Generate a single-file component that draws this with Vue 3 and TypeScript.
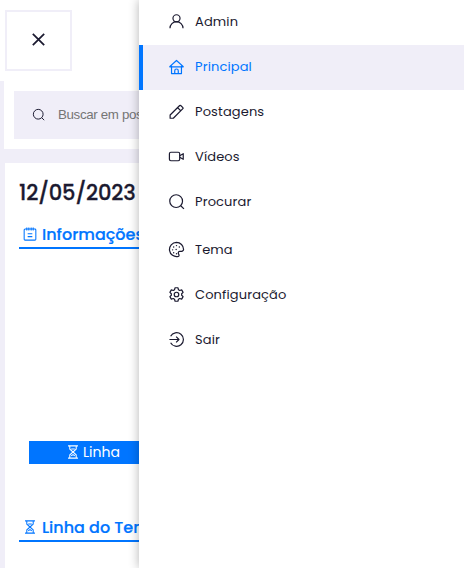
<script setup lang="ts">
interface MenuItem {
  label: string
  icon: string
  active?: boolean
  spaced?: boolean
}

const icons: Record<string, string> = {
  user: '<circle cx="12" cy="7.500" r="5"/><path d="M2.800 21.500a9.200 9.200 0 0 1 18.400 0"/>',
  home: '<path d="M2 12.500 12 3.500l10 9M5 11v11h14V11M2 12.500h20M9.500 22v-4a2.500 2.500 0 0 1 5 0v4"/>',
  pen: '<path d="M3 21.500v-4.500L16.500 3.500q.7-.7 1.400 0L21 6.600q.7.7 0 1.400L7.500 21.500zM13.500 6.500l4.500 4.500"/>',
  video: '<rect x="2" y="6" width="14.500" height="12" rx="2"/><path d="m16.500 11 5-3v8l-5-3"/>',
  search: '<circle cx="11.500" cy="11.500" r="9"/><path d="m18 18 4.500 4.500"/>',
  palette: '<path d="M12 2a10 10 0 1 0 2.500 19.700c1.500-.5 1.300-2 .5-3-1-1.800-.3-4.200 1.700-4.200 2.500.5 5.300-.4 5.300-2.500A10 10 0 0 0 12 2z"/><path stroke-linecap="round" stroke-width="2" d="M12 6.500h.01M8 8.500h.01M16 8.500h.01M6.500 12.500h.01M8 16.500h.01M12 18h.01M11.500 12h.01"/>',
  gear: '<path d="M10 2.500h4l.8 2.800 1.700 1 2.800-.8 2 3.500-2 2v2l2 2-2 3.500-2.800-.8-1.700 1-.8 2.800h-4l-.8-2.800-1.700-1-2.800.8-2-3.500 2-2v-2l-2-2 2-3.500 2.800.8 1.700-1z"/><circle cx="12" cy="12" r="3.200"/>',
  exit: '<path d="M3.700 7.500a9.600 9.600 0 1 1 0 9M2 12h13.500m-4-4 4 4-4 4"/>',
  close: '<path d="m5.500 5.500 13 13m0-13-13 13"/>',
  notes: '<rect x="2" y="3.500" width="20" height="19" rx="1.500"/><path d="M6.500 1v5M10 1v5M14 1v5M17.500 1v5M8 11.500h8M8 16.500h8"/>',
  hourglass: '<path d="M3.500 1.500h17M3.500 22.500h17M6.500 1.500V7l5.500 5 5.500-5V1.500M6.500 22.500V17l5.500-5 5.500 5v5.500M9 7h6M9 18.500l3-2 3 2"/>',
}

const items: MenuItem[] = [
  { label: 'Admin', icon: 'user' },
  { label: 'Principal', icon: 'home', active: true },
  { label: 'Postagens', icon: 'pen' },
  { label: 'Vídeos', icon: 'video' },
  { label: 'Procurar', icon: 'search' },
  { label: 'Tema', icon: 'palette', spaced: true },
  { label: 'Configuração', icon: 'gear' },
  { label: 'Sair', icon: 'exit' },
]
</script>

<template>
  <div class="screen">
    <header class="topbar">
      <button class="close" aria-label="Fechar">
        <svg viewBox="0 0 24 24" v-html="icons.close"></svg>
      </button>
    </header>
    <div class="search-card">
      <div class="search">
        <svg viewBox="0 0 24 24" v-html="icons.search"></svg>
        <span>Buscar em postagens</span>
      </div>
    </div>
    <main class="content">
      <h1>12/05/2023</h1>
      <h2><svg viewBox="0 0 24 24" v-html="icons.notes"></svg><span>Informações</span></h2>
      <div class="chart">
        <div class="tag"><svg viewBox="0 0 24 24" v-html="icons.hourglass"></svg><span>Linha</span></div>
      </div>
      <h2 class="timeline"><svg viewBox="0 0 24 24" v-html="icons.hourglass"></svg><span>Linha do Tempo</span></h2>
    </main>
    <nav class="drawer">
      <a
        v-for="item in items"
        :key="item.label"
        class="item"
        :class="{ active: item.active, spaced: item.spaced }"
      >
        <svg viewBox="0 0 24 24" v-html="icons[item.icon]"></svg>
        <span>{{ item.label }}</span>
      </a>
    </nav>
  </div>
</template>

<style>
body { overflow: hidden; }
</style>

<style scoped>
.screen {
  position: relative;
  box-sizing: border-box;
  width: 464px;
  height: 568px;
  overflow: hidden;
  background: #f0eef8;
  color: #1b1a30;
  font-family: Poppins, Inter, sans-serif;
  white-space: nowrap;
}
svg {
  display: block;
  flex: none;
  fill: none;
  stroke: currentColor;
  stroke-width: 1.8;
  stroke-linejoin: round;
}
.topbar {
  box-sizing: border-box;
  height: 81px;
  padding: 10px 5px;
  background: #fff;
}
.close {
  display: flex;
  align-items: center;
  justify-content: center;
  box-sizing: border-box;
  width: 67px;
  height: 61px;
  padding: 0 1px 2px 0;
  border: 2px solid #f0eef8;
  background: #fff;
  color: #1b1a30;
}
.close svg { width: 21px; height: 21px; stroke-width: 2; }
.search-card {
  box-sizing: border-box;
  height: 68px;
  margin-left: 4px;
  padding: 10px;
  background: #fff;
}
.search {
  display: flex;
  align-items: center;
  gap: 12px;
  height: 48px;
  padding: 0 0 1px 18px;
  box-sizing: border-box;
  background: #f0eef8;
  font: 13.33px "Liberation Sans", sans-serif;
  letter-spacing: -0.35px;
  color: #757575;
}
.search svg { width: 13px; height: 13px; margin-right: 1px; color: #1b1a30; }
.content {
  box-sizing: border-box;
  height: 405px;
  margin: 14px 0 0 5px;
  padding: 14px;
  background: #fff;
}
h1 {
  margin: 0;
  font-size: 21px;
  line-height: 31px;
  font-weight: 500;
  letter-spacing: -0.15px;
  -webkit-text-stroke: 0.3px currentColor;
}
h2 {
  display: flex;
  align-items: center;
  gap: 5px;
  box-sizing: border-box;
  height: 27px;
  margin: 14px 0 0;
  padding: 0 0 1px 4px;
  border-bottom: 2px solid #0075ff;
  color: #0075ff;
  font-size: 16px;
  font-weight: 500;
  -webkit-text-stroke: 0.2px currentColor;
}
h2 svg { width: 14px; height: 14px; }
.chart {
  display: flex;
  align-items: flex-end;
  height: 215px;
  padding-left: 10px;
}
.tag {
  display: flex;
  flex: 1;
  align-items: center;
  gap: 3px;
  height: 23px;
  padding: 0 0 1px 37px;
  box-sizing: border-box;
  background: #0075ff;
  color: #fff;
  font-size: 14px;
}
.tag svg { width: 14px; height: 14px; }
h2.timeline { margin-top: 51px; }
.drawer {
  position: absolute;
  top: 0;
  right: 0;
  width: 325px;
  height: 568px;
  background: #fff;
  box-shadow: 0 0 10px rgba(0, 0, 0, 0.3);
}
.item {
  display: flex;
  align-items: center;
  gap: 10px;
  box-sizing: border-box;
  height: 45px;
  padding: 0 0 2px 29px;
  font-size: 13px;
  letter-spacing: 0.13px;
}
.item svg { width: 17px; height: 17px; stroke-width: 1.7; }
.item.active {
  padding-left: 25px;
  border-left: 4px solid #0075ff;
  background: #f0eef8;
  color: #0075ff;
}
.item.spaced { margin-top: 3px; }
</style>
